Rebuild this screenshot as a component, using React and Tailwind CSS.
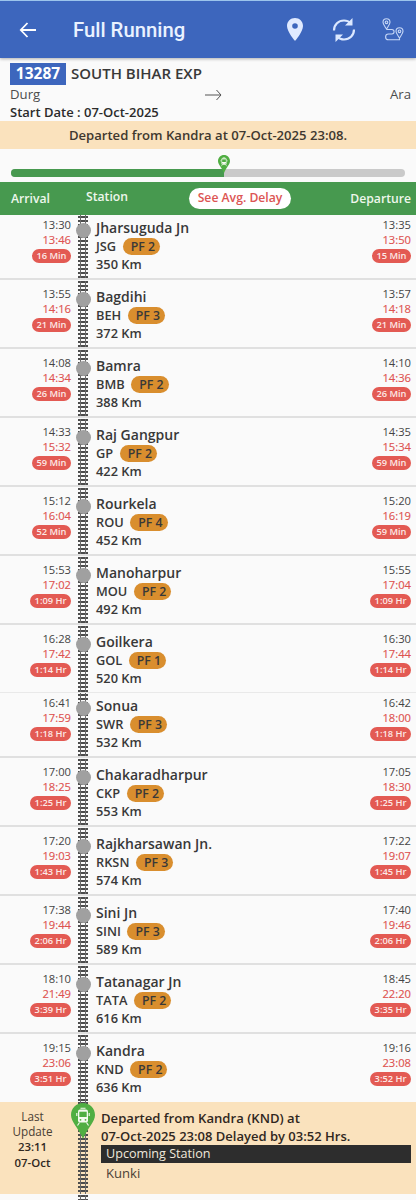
import React from "react";

const stops = [
  { name: "Jharsuguda Jn", code: "JSG", pf: "PF 2", km: 350, arr: "13:30", arrAct: "13:46", arrDelay: "16 Min", dep: "13:35", depAct: "13:50", depDelay: "15 Min", cut: true },
  { name: "Bagdihi", code: "BEH", pf: "PF 3", km: 372, arr: "13:55", arrAct: "14:16", arrDelay: "21 Min", dep: "13:57", depAct: "14:18", depDelay: "21 Min" },
  { name: "Bamra", code: "BMB", pf: "PF 2", km: 388, arr: "14:08", arrAct: "14:34", arrDelay: "26 Min", dep: "14:10", depAct: "14:36", depDelay: "26 Min" },
  { name: "Raj Gangpur", code: "GP", pf: "PF 2", km: 422, arr: "14:33", arrAct: "15:32", arrDelay: "59 Min", dep: "14:35", depAct: "15:34", depDelay: "59 Min" },
  { name: "Rourkela", code: "ROU", pf: "PF 4", km: 452, arr: "15:12", arrAct: "16:04", arrDelay: "52 Min", dep: "15:20", depAct: "16:19", depDelay: "59 Min" },
  { name: "Manoharpur", code: "MOU", pf: "PF 2", km: 492, arr: "15:53", arrAct: "17:02", arrDelay: "1:09 Hr", dep: "15:55", depAct: "17:04", depDelay: "1:09 Hr" },
  { name: "Goilkera", code: "GOL", pf: "PF 1", km: 520, arr: "16:28", arrAct: "17:42", arrDelay: "1:14 Hr", dep: "16:30", depAct: "17:44", depDelay: "1:14 Hr", thin: true },
  { name: "Sonua", code: "SWR", pf: "PF 3", km: 532, arr: "16:41", arrAct: "17:59", arrDelay: "1:18 Hr", dep: "16:42", depAct: "18:00", depDelay: "1:18 Hr", cut: true },
  { name: "Chakaradharpur", code: "CKP", pf: "PF 2", km: 553, arr: "17:00", arrAct: "18:25", arrDelay: "1:25 Hr", dep: "17:05", depAct: "18:30", depDelay: "1:25 Hr" },
  { name: "Rajkharsawan Jn.", code: "RKSN", pf: "PF 3", km: 574, arr: "17:20", arrAct: "19:03", arrDelay: "1:43 Hr", dep: "17:22", depAct: "19:07", depDelay: "1:45 Hr" },
  { name: "Sini Jn", code: "SINI", pf: "PF 3", km: 589, arr: "17:38", arrAct: "19:44", arrDelay: "2:06 Hr", dep: "17:40", depAct: "19:46", depDelay: "2:06 Hr" },
  { name: "Tatanagar Jn", code: "TATA", pf: "PF 2", km: 616, arr: "18:10", arrAct: "21:49", arrDelay: "3:39 Hr", dep: "18:45", depAct: "22:20", depDelay: "3:35 Hr" },
  { name: "Kandra", code: "KND", pf: "PF 2", km: 636, arr: "19:15", arrAct: "23:06", arrDelay: "3:51 Hr", dep: "19:16", depAct: "23:08", depDelay: "3:52 Hr", last: true },
];

const Track = () => (
  <div className="h-full w-[10px] bg-[linear-gradient(90deg,transparent_2px,#6a6a6a_2px,#6a6a6a_3px,transparent_3px,transparent_7px,#6a6a6a_7px,#6a6a6a_8px,transparent_8px),repeating-linear-gradient(180deg,#4c4c4c_0px,#4c4c4c_2px,transparent_2px,transparent_4px)]" />
);

const TrainPin = ({ className }) => (
  <svg viewBox="0 0 24 36" className={className}>
    <path d="M12 0C5.2 0 0 5.3 0 12c0 7 7 12 12 24 5-12 12-17 12-24C24 5.3 18.8 0 12 0z" fill="#50ae42" />
    <rect x="7" y="6.5" width="10" height="13" rx="2" fill="#f5faf0" />
    <path d="M9.5 5.2h5M5.8 10v3M18.2 10v3M8.5 19.5l-2 3M15.5 19.5l2 3" fill="none" stroke="#f5faf0" strokeWidth="1.1" />
    <rect x="8.3" y="8.7" width="7.4" height="5.3" fill="#50ae42" />
    <circle cx="9.5" cy="16.8" r=".9" fill="#50ae42" />
    <circle cx="14.5" cy="16.8" r=".9" fill="#50ae42" />
  </svg>
);

const Times = ({ time, actual, delay }) => (
  <div className="flex flex-col items-end">
    <span className="h-[15px] text-[11.2px] leading-[15px] text-[#444444]">{time}</span>
    <span className="h-[15px] text-[11.2px] leading-[15px] text-[#de5350] [-webkit-text-stroke:0.15px]">{actual}</span>
    <span className="mt-[1.5px] flex h-[14.5px] items-center rounded-full bg-[#e35a53] px-[4.5px] text-[9.3px] leading-none font-semibold text-[#fde9e6]">
      {delay}
    </span>
  </div>
);

const StopRow = ({ stop }) => {
  let box = "h-[68px] border-b-2 border-[#e0e0e0] mb-[1px]";
  if (stop.cut) box = "h-[65px] border-b-2 border-[#e0e0e0] mb-[1px]";
  if (stop.thin) box = "h-[67px] border-b border-[#e9e9e9]";
  if (stop.last) box = "h-[67px]";

  return (
    <div className={`flex shrink-0 flex-col overflow-hidden ${box}`}>
      <div className={`flex w-full flex-1 items-start ${stop.cut ? "-mt-[3px]" : ""}`}>
        <div className="w-[71px] pt-[5px]">
          <Times time={stop.arr} actual={stop.arrAct} delay={stop.arrDelay} />
        </div>
        <div className="relative ml-[5px] h-full w-[15px] pl-[2px]">
          <Track />
          <div className="absolute top-[11px] left-0 size-[15px] rounded-full bg-[#a0a0a0]" />
        </div>
        <div className="ml-[5px] flex-1 pt-[6px] text-[12.8px] font-semibold text-[#383838]">
          <div className="h-[19px] text-[14px] leading-[19px]">{stop.name}</div>
          <div className="flex h-[19px] items-center leading-[19px]">
            {stop.code}
            <span className="ml-[6.5px] flex h-[17px] items-center rounded-full bg-[#d98e2e] pr-[5px] pl-[8px] text-[12.3px]">
              {stop.pf}
            </span>
          </div>
          <div className="h-[18px] leading-[16px]">{stop.km} Km</div>
        </div>
        <div className="pt-[5px] pr-[5px]">
          <Times time={stop.dep} actual={stop.depAct} delay={stop.depDelay} />
        </div>
      </div>
    </div>
  );
};

const App = () => {
  return (
    <div className="flex h-[1200px] w-[416px] flex-col overflow-hidden bg-[#fafafa] font-['Open_Sans','Noto_Sans',sans-serif] text-[#2b2b2b]">
      {/* App bar */}
      <header className="flex h-[58px] shrink-0 items-center border-t border-[#9cc4ec] bg-[#3d66bd] pl-[19px] text-white shadow-[0_1px_3px_rgba(0,0,0,0.3)]">
        <svg viewBox="0 0 18 16" className="h-[16px] w-[18px] fill-none stroke-white stroke-[1.8]">
          <path d="M17 8H2M8.5 1 1.8 8l6.7 7" />
        </svg>
        <h1 className="ml-[36px] flex-1 pt-[2px] font-['Roboto',sans-serif] text-[20.3px] leading-none font-medium text-[#eaf2ff]">
          Full Running
        </h1>
        <svg viewBox="0 0 16 23" className="h-[23px] w-[16px]">
          <path
            fillRule="evenodd"
            d="M8 0C3.5 0 0 3.5 0 8c0 5.8 8 15 8 15s8-9.2 8-15c0-4.5-3.5-8-8-8zm0 5.2a2.8 2.8 0 1 1 0 5.6 2.8 2.8 0 0 1 0-5.6z"
            fill="#e0eaff"
          />
        </svg>
        <svg viewBox="0 0 24 24" className="ml-[29px] h-[24px] w-[24px]">
          <g fill="none" stroke="#dce8ff" strokeWidth="2.2">
            <path d="M2 12.5C2 6.5 6.5 2.5 12 2.5c2.5 0 5 1 6.8 2.8" />
            <path d="M22 11.5c0 6-4.5 10-10 10-2.5 0-5-1-6.8-2.8" />
          </g>
          <path d="M20.5 0v7.5H13zM3.5 24v-7.5H11z" fill="#dce8ff" />
        </svg>
        <svg viewBox="0 0 22 23" className="mr-[12px] ml-[26px] h-[23px] w-[22px] fill-none stroke-[#c6d7f7] stroke-[1.1]">
          <path d="M4.5 11C3 8.5 1 6.5 1 4.3a3.5 3.5 0 0 1 7 0C8 6.5 6 8.5 4.5 11zM17.5 20c-1.5-2.5-3.5-4.5-3.5-6.7a3.5 3.5 0 0 1 7 0c0 2.2-2 4.2-3.5 6.7z" />
          <circle cx="4.5" cy="4.3" r="1.3" />
          <circle cx="17.5" cy="13.3" r="1.3" />
          <path d="M4.5 11.5h5.3a2.2 2.2 0 0 1 0 4.5H6.5a2.9 2.9 0 0 0 0 5.8h11v-1.5" />
        </svg>
      </header>

      {/* Train info */}
      <section className="h-[63px] shrink-0 pt-[4px] pr-[5px] pl-[10px]">
        <div className="flex h-[23px] items-center">
          <span className="flex h-[22px] w-[56px] items-center justify-center bg-[#3d66bd] text-[15.5px] font-bold text-white">13287</span>
          <span className="ml-[5px] text-[15px] font-semibold text-[#383838]">SOUTH BIHAR EXP</span>
        </div>
        <div className="flex h-[19px] items-center justify-between text-[13.2px] text-[#4c4c4c]">
          <span className="w-[27px]">Durg</span>
          <svg viewBox="0 0 17 11" className="h-[12px] w-[17px] fill-none stroke-[#555] stroke-[1]">
            <path d="M0 5.5h16M11.5 .5l4.5 5-4.5 5" />
          </svg>
          <span>Ara</span>
        </div>
        <div className="h-[17px] text-[13px] leading-[17px] font-semibold">Start Date : 07-Oct-2025</div>
      </section>

      <div className="flex h-[28px] shrink-0 items-center justify-center bg-[#fae2bd] pt-[2px] text-[13.1px] font-semibold text-[#40382f]">
        Departed from Kandra at 07-Oct-2025 23:08.
      </div>

      {/* Journey progress */}
      <div className="flex h-[33px] shrink-0 items-end px-[11px] pb-[5px]">
        <div className="relative h-[8px] w-[394px] rounded-full bg-[#cacaca]">
          <div className="h-full w-[213px] rounded-l-full bg-[#47994f]" />
          <TrainPin className="absolute -top-[14px] left-[207px] h-[18px] w-[12px]" />
        </div>
      </div>

      <div className="flex h-[33px] shrink-0 items-center bg-[#47994f] pr-[5px] pl-[11px] text-[12.2px] font-semibold text-[#eef7ec]">
        <span className="w-[75px] pt-[1px]">Arrival</span>
        <span className="mb-[3px] w-[103px]">Station</span>
        <span className="flex h-[21px] w-[102px] items-center justify-center rounded-full bg-white text-[#dc5553]">See Avg. Delay</span>
        <span className="ml-auto pt-[1px]">Departure</span>
      </div>

      {stops.map((stop) => (
        <StopRow key={stop.code} stop={stop} />
      ))}

      {/* Current position */}
      <div className="flex h-[92px] shrink-0 bg-[#fae2bd]">
        <div className="w-[65px] pt-[7px] text-center text-[11.7px] leading-[15.2px] text-[#4b4034]">
          <div>Last</div>
          <div>Update</div>
          <div className="text-[11.4px] font-semibold text-[#30271e]">23:11</div>
          <div className="text-[11.4px] font-semibold text-[#30271e]">07-Oct</div>
        </div>
        <div className="relative ml-[6px] h-full w-[24px] pl-[7px]">
          <Track />
          <TrainPin className="absolute top-[1px] left-0 h-[36px] w-[24px]" />
        </div>
        <div className="ml-[6px] flex-1 pt-[7px] pr-[5px] text-[13.1px]">
          <div className="h-[18px] leading-[18px] font-semibold text-[#30271e]">Departed from Kandra (KND) at</div>
          <div className="h-[18px] text-[13px] leading-[18px] font-semibold text-[#30271e]">07-Oct-2025 23:08 Delayed by 03:52 Hrs.</div>
          <div className="h-[18px] bg-[#2d2d2d] pl-[5px] text-[12.6px] leading-[18px] text-[#f0e8dc]">Upcoming Station</div>
          <div className="pl-[5px] leading-[20px] text-[#4b4034]">Kunki</div>
        </div>
      </div>
      <div className="h-[6px] shrink-0 pt-[1px] pl-[78px]">
        <Track />
      </div>
    </div>
  );
};

export default App;
